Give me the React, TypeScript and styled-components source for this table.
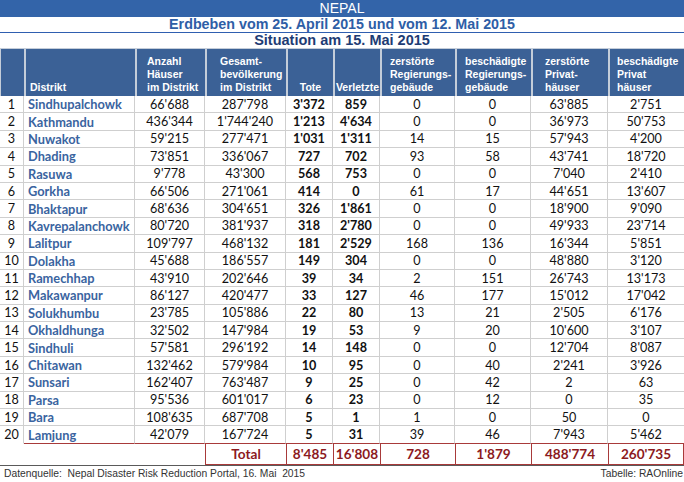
import React from "react";
import styled, { createGlobalStyle } from "styled-components";

const GlobalStyle = createGlobalStyle`
  html, body { margin: 0; padding: 0; background: #ffffff; }
  body { width: 684px; height: 482px; overflow: hidden; }
  * { box-sizing: border-box; }
`;

const COLS = "24px 111px 70px 81px 47px 47px 75px 76px 77px 76px";

const Page = styled.div`
  width: 684px;
  display: flex;
  flex-direction: column;
  font-family: "Liberation Sans", Arial, sans-serif;
`;

const Banner = styled.div`
  height: 17px;
  background: #3364a9;
  color: #ffffff;
  font-size: 14px;
  line-height: 17px;
  text-align: center;
`;

const Title = styled.div`
  height: 16px;
  border-bottom: 1px solid #2f5fb0;
  color: #2e5ea6;
  font-weight: bold;
  font-size: 14.3px;
  line-height: 15px;
  text-align: center;
`;

const SubTitle = styled.div`
  height: 15px;
  color: #1e3c74;
  font-weight: bold;
  font-size: 14.5px;
  line-height: 15px;
  text-align: center;
`;

const HeaderRow = styled.div`
  display: grid;
  grid-template-columns: ${COLS};
  height: 48px;
  background: #3b6196;
  border-top: 1px solid #c4cdd9;
`;

const HeadCell = styled.div<{ $pl?: number; $center?: boolean }>`
  display: flex;
  flex-direction: column;
  justify-content: flex-end;
  align-items: ${(p) => (p.$center ? "center" : "flex-start")};
  padding-left: ${(p) => p.$pl ?? 0}px;
  padding-bottom: 2px;
  border-left: 2px solid #c4cdd9;
  color: #ffffff;
  font-weight: bold;
  font-size: 10.5px;
  line-height: 13px;
  white-space: nowrap;
  &:first-child { border-left: 1px solid #c4cdd9; }
`;

const Row = styled.div`
  display: grid;
  grid-template-columns: ${COLS};
  height: 17.4px;
`;

const Cell = styled.div<{ $align?: "left" | "center"; $bold?: boolean; $district?: boolean; $noBottom?: boolean; $redBottom?: boolean }>`
  display: flex;
  align-items: center;
  justify-content: ${(p) => (p.$align === "left" ? "flex-start" : "center")};
  padding-left: ${(p) => (p.$align === "left" ? "4px" : "0")};
  border-right: 1px solid #cfcfcf;
  border-bottom: ${(p) => (p.$noBottom ? "1px solid transparent" : p.$redBottom ? "1px solid #a83a3a" : "1px solid #cfcfcf")};
  font-family: Lato, "Liberation Sans", sans-serif;
  font-size: ${(p) => (p.$district ? "12.8px" : "12.6px")};
  font-weight: ${(p) => (p.$bold || p.$district ? "bold" : "normal")};
  color: ${(p) => (p.$district ? "#3a64a0" : "#111111")};
  white-space: nowrap;
  &:last-child { border-right: none; }
`;

const TotalRow = styled.div`
  display: grid;
  grid-template-columns: 205px 81px 47px 47px 75px 76px 77px 76px;
  height: 22px;
  border-bottom: 1px solid #5a5a5a;
`;

const Blank = styled.div``;

const TotalCell = styled.div`
  display: flex;
  align-items: center;
  justify-content: center;
  border-left: 1px solid #a83a3a;
  border-bottom: 1px solid #a83a3a;
  color: #8c1a1e;
  font-family: Lato, "Liberation Sans", sans-serif;
  font-weight: bold;
  font-size: 13.6px;
  &:last-child { border-right: 1px solid #a83a3a; }
`;

const Footer = styled.div`
  display: flex;
  justify-content: space-between;
  align-items: center;
  height: 16px;
  padding: 0 1px 0 4px;
  color: #333333;
  font-size: 10.3px;
  white-space: pre;
`;

type R = [string, string, string, string, string, string, string, string, string];

const rows: R[] = [
  ["Sindhupalchowk", "66'688", "287'798", "3'372", "859", "0", "0", "63'885", "2'751"],
  ["Kathmandu", "436'344", "1'744'240", "1'213", "4'634", "0", "0", "36'973", "50'753"],
  ["Nuwakot", "59'215", "277'471", "1'031", "1'311", "14", "15", "57'943", "4'200"],
  ["Dhading", "73'851", "336'067", "727", "702", "93", "58", "43'741", "18'720"],
  ["Rasuwa", "9'778", "43'300", "568", "753", "0", "0", "7'040", "2'410"],
  ["Gorkha", "66'506", "271'061", "414", "0", "61", "17", "44'651", "13'607"],
  ["Bhaktapur", "68'636", "304'651", "326", "1'861", "0", "0", "18'900", "9'090"],
  ["Kavrepalanchowk", "80'720", "381'937", "318", "2'780", "0", "0", "49'933", "23'714"],
  ["Lalitpur", "109'797", "468'132", "181", "2'529", "168", "136", "16'344", "5'851"],
  ["Dolakha", "45'688", "186'557", "149", "304", "0", "0", "48'880", "3'120"],
  ["Ramechhap", "43'910", "202'646", "39", "34", "2", "151", "26'743", "13'173"],
  ["Makawanpur", "86'127", "420'477", "33", "127", "46", "177", "15'012", "17'042"],
  ["Solukhumbu", "23'785", "105'886", "22", "80", "13", "21", "2'505", "6'176"],
  ["Okhaldhunga", "32'502", "147'984", "19", "53", "9", "20", "10'600", "3'107"],
  ["Sindhuli", "57'581", "296'192", "14", "148", "0", "0", "12'704", "8'087"],
  ["Chitawan", "132'462", "579'984", "10", "95", "0", "40", "2'241", "3'926"],
  ["Sunsari", "162'407", "763'487", "9", "25", "0", "42", "2", "63"],
  ["Parsa", "95'536", "601'017", "6", "23", "0", "12", "0", "35"],
  ["Bara", "108'635", "687'708", "5", "1", "1", "0", "50", "0"],
  ["Lamjung", "42'079", "167'724", "5", "31", "39", "46", "7'943", "5'462"],
];

const totals = ["Total", "8'485", "16'808", "728", "1'879", "488'774", "260'735"];

export default function App() {
  return (
    <>
      <GlobalStyle />
      <Page>
        <Banner>NEPAL</Banner>
        <Title>Erdbeben vom 25. April 2015 und vom 12. Mai 2015</Title>
        <SubTitle>Situation am 15. Mai 2015</SubTitle>
        <HeaderRow>
          <HeadCell />
          <HeadCell $pl={4}>Distrikt</HeadCell>
          <HeadCell $pl={10}>
            <span>Anzahl</span>
            <span>Häuser</span>
            <span>im Distrikt</span>
          </HeadCell>
          <HeadCell $pl={13}>
            <span>Gesamt-</span>
            <span>bevölkerung</span>
            <span>im Distrikt</span>
          </HeadCell>
          <HeadCell $center>Tote</HeadCell>
          <HeadCell $center>Verletzte</HeadCell>
          <HeadCell $pl={8}>
            <span>zerstörte</span>
            <span>Regierungs-</span>
            <span>gebäude</span>
          </HeadCell>
          <HeadCell $pl={8}>
            <span>beschädigte</span>
            <span>Regierungs-</span>
            <span>gebäude</span>
          </HeadCell>
          <HeadCell $pl={12}>
            <span>zerstörte</span>
            <span>Privat-</span>
            <span>häuser</span>
          </HeadCell>
          <HeadCell $pl={7}>
            <span>beschädigte</span>
            <span>Privat</span>
            <span>häuser</span>
          </HeadCell>
        </HeaderRow>
        {rows.map((r, i) => {
          const last = i === rows.length - 1;
          return (
            <Row key={i}>
              <Cell $noBottom={last}>{i + 1}</Cell>
              <Cell $align="left" $district $redBottom={last}>{r[0]}</Cell>
              <Cell $redBottom={last}>{r[1]}</Cell>
              <Cell $redBottom={last}>{r[2]}</Cell>
              <Cell $bold $redBottom={last}>{r[3]}</Cell>
              <Cell $bold $redBottom={last}>{r[4]}</Cell>
              <Cell $redBottom={last}>{r[5]}</Cell>
              <Cell $redBottom={last}>{r[6]}</Cell>
              <Cell $redBottom={last}>{r[7]}</Cell>
              <Cell $redBottom={last}>{r[8]}</Cell>
            </Row>
          );
        })}
        <TotalRow>
          <Blank />
          {totals.map((t) => (
            <TotalCell key={t}>{t}</TotalCell>
          ))}
        </TotalRow>
        <Footer>
          <span>Datenquelle:  Nepal Disaster Risk Reduction Portal, 16. Mai  2015</span>
          <span>Tabelle: RAOnline</span>
        </Footer>
      </Page>
    </>
  );
}
